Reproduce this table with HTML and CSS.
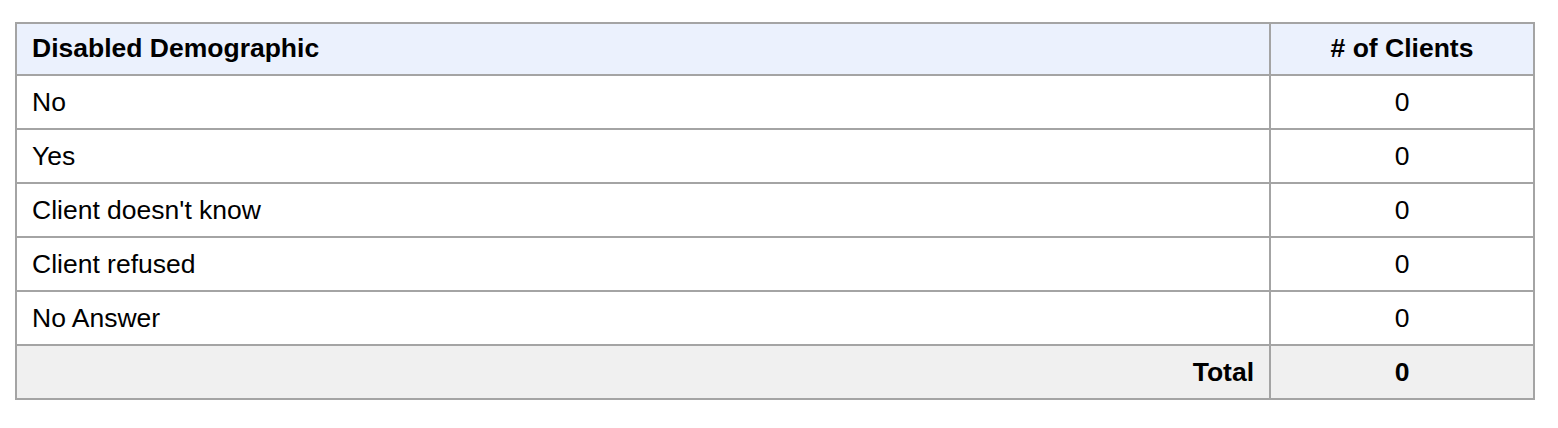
FILE: index.html
```html
<!DOCTYPE html>
<html lang="en">
<head>
<meta charset="utf-8">
<title>Disabled Demographic</title>
<link rel="stylesheet" href="styles.css">
</head>
<body>
<table class="report">
  <colgroup>
    <col class="col-label">
    <col class="col-count">
  </colgroup>
  <thead>
    <tr class="head-row">
      <th class="label">Disabled Demographic</th>
      <th class="count"># of Clients</th>
    </tr>
  </thead>
  <tbody>
    <tr><td class="label">No</td><td class="count">0</td></tr>
    <tr><td class="label">Yes</td><td class="count">0</td></tr>
    <tr><td class="label">Client doesn't know</td><td class="count">0</td></tr>
    <tr><td class="label">Client refused</td><td class="count">0</td></tr>
    <tr><td class="label">No Answer</td><td class="count">0</td></tr>
  </tbody>
  <tfoot>
    <tr class="total-row">
      <td class="total-label">Total</td>
      <td class="count total-value">0</td>
    </tr>
  </tfoot>
</table>
</body>
</html>
```
FILE: styles.css
```css
html, body {
  margin: 0;
  padding: 0;
  background: #ffffff;
}

body {
  padding: 22px 0 0 15px;
  font-family: "Liberation Sans", Arial, Helvetica, sans-serif;
  font-size: 26.5px;
  color: #000;
}

.report {
  width: 1520px;
  border-collapse: collapse;
  table-layout: fixed;
  border: 2px solid #a4a4a4;
}

.col-count {
  width: 264px;
}

.report th,
.report td {
  border: 2px solid #a4a4a4;
  line-height: 30px;
  padding: 11px 15px;
  text-align: left;
  font-weight: normal;
}

.head-row th {
  background: #ebf1fd;
  font-weight: bold;
  padding-top: 9px;
  padding-bottom: 11px;
}

.report .count {
  text-align: center;
}

.total-row td {
  background: #f0f0f0;
  font-weight: bold;
}

.report .total-label {
  text-align: right;
}
```
